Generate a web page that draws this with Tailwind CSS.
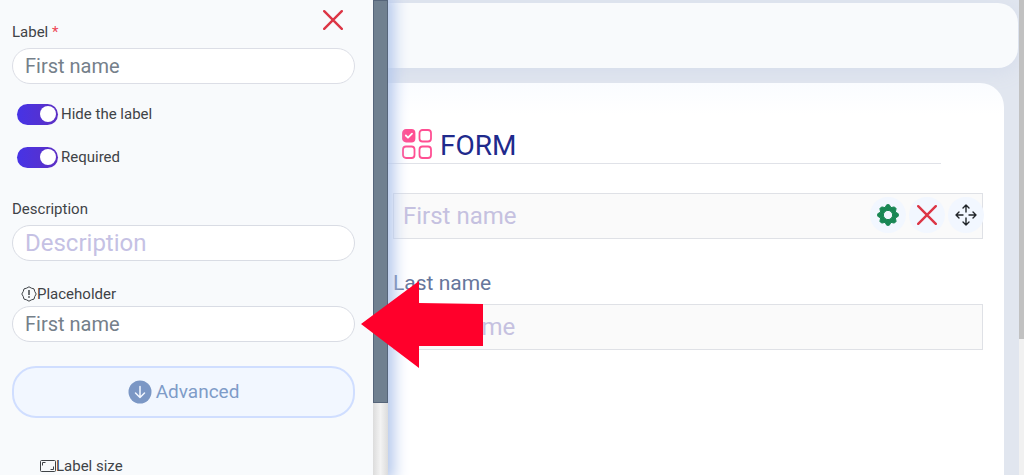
<!DOCTYPE html>
<html lang="en">
<head>
  <meta charset="utf-8">
  <meta name="viewport" content="width=device-width, initial-scale=1">
  <title>Form builder</title>
  <script src="https://cdn.jsdelivr.net/npm/@tailwindcss/browser@4"></script>
</head>
<body class="font-[Roboto,sans-serif] text-[15px] leading-6 text-[#3f4347]">
<div class="relative flex h-screen overflow-hidden bg-[#e1e6ef]">

  <!-- Field settings -->
  <aside class="relative z-10 flex w-[388px] shrink-0 bg-[#f8fafc] shadow-[0_0_14px_6px_#b3c7ec]">
    <form class="relative flex flex-1 flex-col pt-5 pr-[18px] pl-3">
      <button type="button" aria-label="Close" class="absolute top-2 right-7 flex size-6 items-center justify-center text-[#dc3545]">
        <svg class="size-5" viewBox="0 0 20 20" fill="none" stroke="currentColor" stroke-width="2.4" stroke-linecap="round"><path d="M1.2 1.2 18.8 18.8M18.8 1.2 1.2 18.8"/></svg>
      </button>

      <label for="label">Label <span class="text-[#ee4455]">*</span></label>
      <input id="label" type="text" value="First name" class="mt-1 h-9 shrink-0 rounded-full border border-[#dcdee6] bg-white px-3 text-xl text-[#75808a]">

      <label class="mt-[18px] flex items-center gap-[3px] pl-[5px]">
        <input type="checkbox" checked class="peer sr-only">
        <span class="flex h-[21px] w-[41px] items-center justify-end rounded-full bg-linear-to-r from-[#4633e6] to-[#5c2fc4] pr-[2px]"><span class="size-4 rounded-full bg-white"></span></span>
        Hide the label
      </label>
      <label class="mt-[19px] flex items-center gap-[3px] pl-[5px]">
        <input type="checkbox" checked class="peer sr-only">
        <span class="flex h-[21px] w-[41px] items-center justify-end rounded-full bg-linear-to-r from-[#4633e6] to-[#5c2fc4] pr-[2px]"><span class="size-4 rounded-full bg-white"></span></span>
        Required
      </label>

      <label for="description" class="mt-7">Description</label>
      <input id="description" type="text" placeholder="Description" class="mt-1 h-9 shrink-0 rounded-full border border-[#d9dce4] bg-white px-3 text-2xl placeholder:text-[#c5c1e4]">

      <label for="placeholder" class="mt-[21px] flex items-center pl-[9px]">
        <svg class="size-4" viewBox="0 0 16 16" fill="none" stroke="currentColor"><path d="M8 .8 10.3 2.1 13 2.9 13.8 5.6 15.2 8 13.8 10.4 13 13.1 10.3 13.9 8 15.2 5.7 13.9 3 13.1 2.2 10.4.8 8 2.2 5.6 3 2.9 5.7 2.1Z" stroke-linejoin="round"/><path d="M8 4v5" stroke-width="1.5"/><path d="M8 10.3v1.5" stroke-width="1.6"/></svg>
        Placeholder
      </label>
      <input id="placeholder" type="text" value="First name" class="h-9 shrink-0 rounded-full border border-[#d9dce4] bg-white px-3 text-xl text-[#75808a]">

      <button type="button" class="mt-6 flex h-[52px] shrink-0 items-center justify-center gap-1 rounded-[24px] border-2 border-[#d0deff] bg-[#f2f7ff] text-[19px] text-[#7f9cc8]">
        <svg class="size-6" viewBox="0 0 24 24" fill="none"><circle cx="12" cy="12" r="11.5" fill="#7b97c5"/><path d="M12 6.5v11M7.5 13 12 17.5 16.5 13" stroke="#f2f7ff" stroke-width="1.5" stroke-linecap="round" stroke-linejoin="round"/></svg>
        Advanced
      </button>

      <div class="mt-9 flex items-center pl-7">
        <svg class="size-4" viewBox="0 0 16 16" fill="none" stroke="currentColor"><rect x=".5" y="2.5" width="15" height="11" rx="1"/><path d="M2.5 7.5v-3h3M13.5 8.5v3h-3"/></svg>
        Label size
      </div>
    </form>
    <div class="w-[15px] bg-linear-to-r from-[#dcdcdc] via-[#f3f3f3] to-[#dcdcdc]">
      <div class="h-[403px] border border-[#56657a] bg-[#708090]"></div>
    </div>
  </aside>

  <!-- Form preview -->
  <main class="flex min-w-0 flex-1 flex-col pt-[3px]">
    <div class="mr-px h-[65px] shrink-0 rounded-r-[20px] bg-[#f8fafc] shadow-[0_4px_20px_#d5dceb]"></div>
    <section class="mt-[15px] mr-[15px] flex-1 rounded-tr-[24px] bg-linear-to-b from-[#fafcff] to-white to-[32px] pt-[46px] pr-[21px]">
      <h1 class="mr-[42px] flex h-[35px] items-center gap-2 border-b border-[#e0e2e8] pl-[14px] text-[28px] text-[#1f2a8c]">
        <svg class="mb-1 size-[30px]" viewBox="0 0 30 30" fill="none" stroke="#ff4f93" stroke-width="1.8"><rect x="1" y="1" width="11.5" height="11.5" rx="3" fill="#ff4f93"/><rect x="17.5" y="1" width="11.5" height="11.5" rx="3"/><rect x="1" y="17.5" width="11.5" height="11.5" rx="3"/><rect x="17.5" y="17.5" width="11.5" height="11.5" rx="3"/><path d="m3.8 6.5 2.2 2.2 4-4" stroke="#fff" stroke-linecap="round" stroke-linejoin="round"/></svg>
        FORM
      </h1>

      <div class="relative mt-[29px] ml-[5px]">
        <input type="text" aria-label="First name" placeholder="First name" class="h-[46px] w-full border border-[#dfe1e6] bg-[#fafafa] px-[9px] text-2xl placeholder:text-[#c5c1e0]">
        <div class="absolute top-1 -right-px flex gap-[3px]">
          <button type="button" aria-label="Settings" class="flex size-9 items-center justify-center rounded-full bg-[#f2f7ff] text-[#198754]">
            <svg class="size-[22px]" viewBox="-11 -11 22 22" fill="currentColor" stroke="currentColor" stroke-linejoin="round"><path fill-rule="evenodd" d="M-1.2-10.3H1.2L3-7.4 6.4-8.1 8.1-6.4 7.4-3 10.3-1.2V1.2L7.4 3 8.1 6.4 6.4 8.1 3 7.4 1.2 10.3H-1.2L-3 7.4-6.4 8.1-8.1 6.4-7.4 3-10.3 1.2V-1.2L-7.4-3-8.1-6.4-6.4-8.1-3-7.4ZM-4.600 0A4.600 4.600 0 0 0 4.600 0A4.600 4.600 0 0 0-4.600 0Z"/></svg>
          </button>
          <button type="button" aria-label="Delete" class="flex size-9 items-center justify-center rounded-full bg-[#f2f7ff] text-[#dc3545]">
            <svg class="size-5" viewBox="0 0 20 20" fill="none" stroke="currentColor" stroke-width="2.4" stroke-linecap="round"><path d="M1.2 1.2 18.8 18.8M18.8 1.2 1.2 18.8"/></svg>
          </button>
          <button type="button" aria-label="Move" class="flex size-9 items-center justify-center rounded-full bg-[#f2f7ff] text-[#212529]">
            <svg class="size-[22px]" viewBox="0 0 22 22" fill="none" stroke="currentColor" stroke-width="1.4" stroke-linecap="round" stroke-linejoin="round"><path d="M11 8V1M8 4l3-3 3 3M11 14v7M8 18l3 3 3-3M8 11H1M4 8l-3 3 3 3M14 11h7M18 8l3 3-3 3"/></svg>
          </button>
        </div>
      </div>

      <div class="mt-[27px] ml-[5px] flex flex-col gap-1">
        <label for="last-name" class="text-[21px] leading-[34px] text-[#66769c]">Last name</label>
        <input id="last-name" type="text" placeholder="Last name" class="h-[46px] border border-[#dfe1e6] bg-[#fafafa] px-[9px] text-2xl placeholder:text-[#c5c1e0]">
      </div>
    </section>
  </main>

  <div class="w-[5px] shrink-0 bg-[#f1f1f1]">
    <div class="h-[339px] bg-[#c1c1c1]"></div>
  </div>

  <!-- Pointer to the placeholder field -->
  <svg class="absolute top-[281px] left-[361px] z-20 h-[88px] w-[123px]" viewBox="0 0 123 88"><path d="M0 43 58 0V22L122 23V65L58 65V87Z" fill="#ff002b"/></svg>
</div>
</body>
</html>
